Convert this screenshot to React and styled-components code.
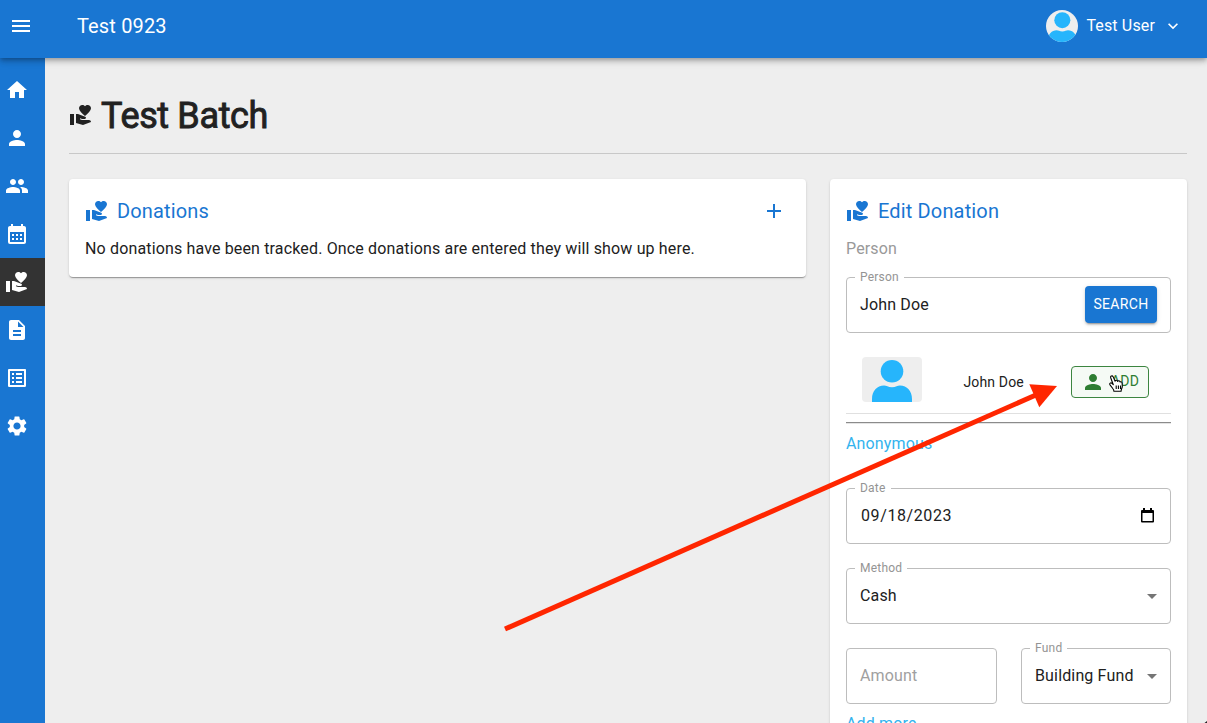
import React from "react";
import styled, { createGlobalStyle } from "styled-components";
import {
  MdMenu, MdHome, MdPerson, MdPeople, MdCalendarMonth, MdVolunteerActivism,
  MdDescription, MdListAlt, MdSettings, MdAdd, MdExpandMore, MdArrowDropDown,
} from "react-icons/md";

const GlobalStyle = createGlobalStyle`
  * { box-sizing: border-box; }
  html, body { margin: 0; height: 100%; overflow: hidden; }
  body { font-family: Roboto, "Liberation Sans", sans-serif; font-size: 16px; letter-spacing: 0.15px; color: #212121; background: #eeeeee; }
  h1, h2, p { margin: 0; font-weight: 400; }
  svg { display: block; flex-shrink: 0; }
`;

const Page = styled.div`
  position: relative;
  height: 723px;
  overflow: hidden;
  display: flex;
  flex-direction: column;
`;

const Header = styled.header`
  position: relative;
  z-index: 1;
  flex: 0 0 58px;
  display: flex;
  align-items: center;
  padding: 0 24px 6px 9px;
  background: #1976d2;
  color: #fff;
  box-shadow: 0 2px 4px -1px rgba(0, 0, 0, 0.2), 0 4px 5px rgba(0, 0, 0, 0.14), 0 1px 10px rgba(0, 0, 0, 0.12);
`;

const HeaderTitle = styled.div`
  margin-left: 44px;
  flex: 1;
  font-size: 20px;
`;

const UserMenu = styled.div`
  display: flex;
  align-items: center;
`;

const Avatar = styled.div`
  width: ${(p) => p.$w}px;
  height: ${(p) => p.$h}px;
  border-radius: ${(p) => p.$radius};
  background: #eeeeee;
  overflow: hidden;
  display: flex;
  justify-content: center;
`;

const UserName = styled.span`
  margin: 0 8px 0 8px;
  padding-bottom: 2px;
`;

const Body = styled.div`
  flex: 1;
  display: flex;
  min-height: 0;
`;

const Sidebar = styled.nav`
  flex: 0 0 45px;
  padding-top: 8px;
  background: #1976d2;
`;

const NavItem = styled.a`
  display: flex;
  align-items: center;
  height: 48px;
  padding-left: 5px;
  color: #fff;
  background: ${(p) => (p.$active ? "#333333" : "transparent")};
`;

const Main = styled.main`
  flex: 1;
  padding: 32px 20px 0 24px;
`;

const PageTitle = styled.h1`
  display: flex;
  align-items: center;
  gap: 8px;
  height: 50px;
  margin-bottom: 13px;
  font-size: 36px;
  line-height: 50px;
  letter-spacing: -0.35px;
  -webkit-text-stroke: 0.9px #212121;

  svg { -webkit-text-stroke: 0; }
`;

const TitleText = styled.span`
  padding-top: 1px;
`;

const Columns = styled.div`
  display: grid;
  grid-template-columns: 737px 357px;
  gap: 24px;
  align-items: start;
  padding-top: 25px;
  border-top: 1px solid #c8c8c8;
`;

const Card = styled.section`
  height: ${(p) => p.$h}px;
  padding: 16px;
  background: #fff;
  border-radius: 4px;
  box-shadow: 0 2px 1px -1px rgba(0, 0, 0, 0.2), 0 1px 1px rgba(0, 0, 0, 0.14), 0 1px 3px rgba(0, 0, 0, 0.12);
`;

const CardHeader = styled.div`
  display: flex;
  align-items: center;
  height: 32px;
  padding-right: 4px;
  color: #1976d2;
`;

const CardTitle = styled.h2`
  flex: 1;
  margin-left: 8px;
  font-size: 20px;
`;

const Text = styled.p`
  margin-top: 10px;
  line-height: 24px;
  color: ${(p) => (p.$muted ? "#999999" : "#212121")};
`;

const Field = styled.div`
  position: relative;
  display: flex;
  align-items: center;
  justify-content: space-between;
  height: 56px;
  margin-top: ${(p) => p.$top || 0}px;
  padding: 0 13px;
  border: 1px solid #bdbdbd;
  border-radius: 4px;
`;

const FieldLabel = styled.label`
  position: absolute;
  top: -9px;
  left: 8px;
  padding: 0 5px;
  background: #fff;
  font-size: 12px;
  line-height: 16px;
  letter-spacing: 0.22px;
  color: #949494;
`;

const FieldValue = styled.span`
  letter-spacing: ${(p) => p.$spacing || 0.15}px;
  color: ${(p) => (p.$muted ? "#a0a0a0" : "#212121")};
  padding: 0 0 2px ${(p) => p.$indent || 0}px;
`;

const FieldPair = styled.div`
  display: grid;
  grid-template-columns: 151px 150px;
  gap: 24px;
  margin-top: 24px;
`;

const Caret = styled(MdArrowDropDown)`
  margin-right: -7px;
  color: #757575;
`;

const SearchButton = styled.button`
  width: 72px;
  height: 37px;
  margin-bottom: 2px;
  padding: 0;
  border: 0;
  border-radius: 4px;
  background: #1976d2;
  color: #fff;
  font: 400 14px Roboto, sans-serif;
  letter-spacing: 0.35px;
  box-shadow: 0 3px 1px -2px rgba(0, 0, 0, 0.2), 0 2px 2px rgba(0, 0, 0, 0.14), 0 1px 5px rgba(0, 0, 0, 0.12);
`;

const ResultRow = styled.div`
  display: grid;
  grid-template-columns: 60px 78px 78px;
  column-gap: 41px;
  height: 81px;
  padding: 24px 0 0 16px;
  border-bottom: 1px solid #e0e0e0;
`;

const ResultName = styled.span`
  padding: 16px 0 0 0.5px;
  font-size: 14px;
  line-height: 18px;
  letter-spacing: 0.15px;
  white-space: nowrap;
`;

const AddButton = styled.button`
  display: flex;
  align-items: center;
  width: 78px;
  height: 32px;
  margin: 9px 0 0 -11px;
  padding: 0 8px 0 9px;
  border: 1px solid #3c8540;
  border-radius: 4px;
  background: #f5faf5;
  color: #2e7d32;
  font: 400 14px Roboto, sans-serif;
  letter-spacing: 0.2px;
`;

const AddText = styled.span`
  margin: -3px 0 0 6px;
`;

const Divider = styled.div`
  height: 2px;
  margin-top: 8px;
  border-top: 1px solid #8b8b8b;
  border-bottom: 1px solid #e4e4e4;
`;

const LinkText = styled.a`
  display: block;
  margin-top: ${(p) => p.$top}px;
  line-height: 24px;
  color: #33b3ee;
`;

const Overlay = styled.svg`
  position: absolute;
  inset: 0;
  z-index: 2;
  pointer-events: none;
`;

const DateGlyph = styled.svg`
  margin: 0 3px 2px 0;
`;

const NAV = [
  ["home", MdHome], ["person", MdPerson], ["people", MdPeople], ["calendar", MdCalendarMonth],
  ["donations", MdVolunteerActivism], ["forms", MdDescription], ["lists", MdListAlt], ["settings", MdSettings],
];

function PersonPicture({ width, height }) {
  return (
    <svg width={width} height={height} viewBox="0 0 60 45" fill="#26b5fc">
      <circle cx="30" cy="14.3" r="11.3" />
      <path d="M10 45v-3c0-8 5-13.500 12-13.500 2.500 0 4 1.700 8 1.700s5.500-1.700 8-1.700c7 0 12 5.500 12 13.500v3z" />
    </svg>
  );
}

function DateIcon() {
  return (
    <DateGlyph width="13" height="15" viewBox="0 0 13 15">
      <path d="M2 0h2v2h5V0h2v2h1q1 0 1 1v10.500q0 1-1 1H1q-1 0-1-1V3q0-1 1-1h1zM1.500 5v8h10V5z" fill="#000" fillRule="evenodd" />
    </DateGlyph>
  );
}

export default function App() {
  return (
    <Page>
      <GlobalStyle />
      <Header>
        <MdMenu size={24} />
        <HeaderTitle>Test 0923</HeaderTitle>
        <UserMenu>
          <Avatar $w={32} $h={32} $radius="50%"><PersonPicture width={42.67} height={32} /></Avatar>
          <UserName>Test User</UserName>
          <MdExpandMore size={20} />
        </UserMenu>
      </Header>
      <Body>
        <Sidebar>
          {NAV.map(([id, Icon]) => (
            <NavItem key={id} $active={id === "donations"}><Icon size={24} /></NavItem>
          ))}
        </Sidebar>
        <Main>
          <PageTitle><MdVolunteerActivism size={24} /><TitleText>Test Batch</TitleText></PageTitle>
          <Columns>
            <Card $h={98}>
              <CardHeader>
                <MdVolunteerActivism size={24} />
                <CardTitle>Donations</CardTitle>
                <MdAdd size={24} />
              </CardHeader>
              <Text>No donations have been tracked. Once donations are entered they will show up here.</Text>
            </Card>
            <Card $h={640}>
              <CardHeader>
                <MdVolunteerActivism size={24} />
                <CardTitle>Edit Donation</CardTitle>
              </CardHeader>
              <Text $muted>Person</Text>
              <Field $top={16}>
                <FieldLabel>Person</FieldLabel>
                <FieldValue>John Doe</FieldValue>
                <SearchButton>SEARCH</SearchButton>
              </Field>
              <ResultRow>
                <Avatar $w={60} $h={45} $radius="4px"><PersonPicture width={60} height={45} /></Avatar>
                <ResultName>John Doe</ResultName>
                <AddButton><MdPerson size={24} /><AddText>ADD</AddText></AddButton>
              </ResultRow>
              <Divider />
              <LinkText $top={8}>Anonymous</LinkText>
              <Field $top={32}>
                <FieldLabel>Date</FieldLabel>
                <FieldValue $indent={1} $spacing={0.6}>09/18/2023</FieldValue>
                <DateIcon />
              </Field>
              <Field $top={24}>
                <FieldLabel>Method</FieldLabel>
                <FieldValue>Cash</FieldValue>
                <Caret size={24} />
              </Field>
              <FieldPair>
                <Field><FieldValue $muted>Amount</FieldValue></Field>
                <Field>
                  <FieldLabel>Fund</FieldLabel>
                  <FieldValue>Building Fund</FieldValue>
                  <Caret size={24} />
                </Field>
              </FieldPair>
              <LinkText $top={8}>Add more</LinkText>
            </Card>
          </Columns>
        </Main>
      </Body>
      <Overlay width="1207" height="723" viewBox="0 0 1207 723">
        <path d="M505 629L1037 394.500" stroke="#ff2600" strokeWidth="5" />
        <path d="M1057 386L1029.300 384.300L1039.300 407.300Z" fill="#ff2600" />
        <path
          d="M1112.800 388.500l-2.800-3.700c-1-1.500.8-2.600 2-1.400l1.300 1.300-2.600-7c-.6-1.900 1.700-2.600 2.500-.8l1.900 4.300c.3-1.300 2.200-1.200 2.500.2.700-1 2.200-.7 2.400.6.900-.7 2 0 2.100 1.200l.2 3.300c0 1.500-1.200 2.800-1.200 4.700h-7.200c0-1.200-.4-1.900-1.100-2.700zM1116.200 385.500v3.500M1118.400 385.500v3.500M1120.500 385.500v3.500"
          fill="#fff" stroke="#000" strokeWidth="1.100" strokeLinejoin="round"
        />
        <path d="M1207 721v2h-2.500z" fill="#222" />
      </Overlay>
    </Page>
  );
}
